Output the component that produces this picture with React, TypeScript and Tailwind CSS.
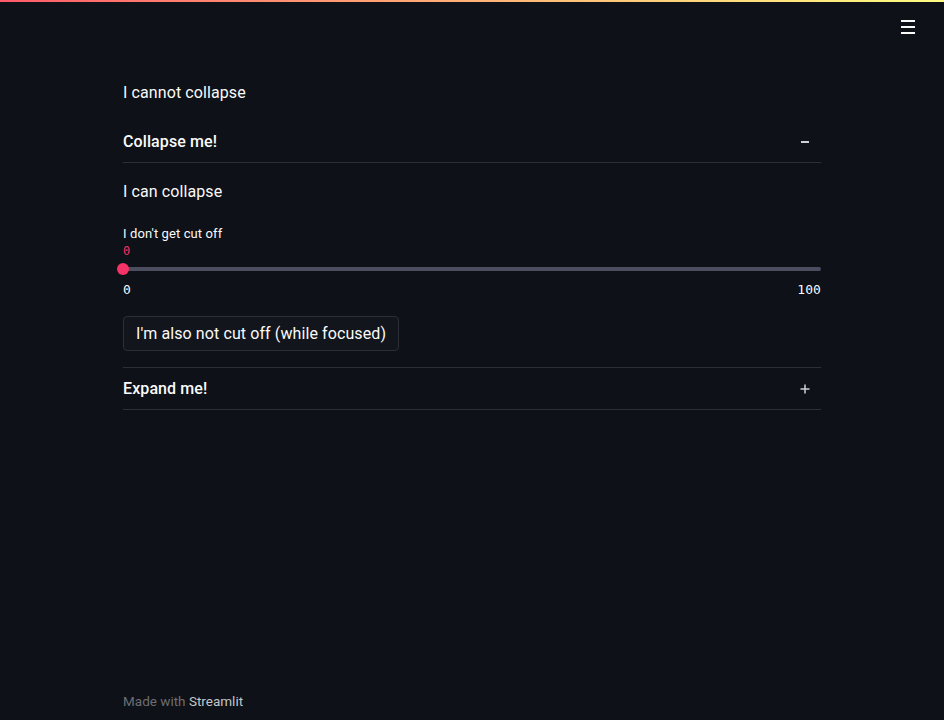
import type { ReactNode } from 'react';

const sans = "font-['Roboto',_'Inter',_sans-serif]";
const mono = "font-['DejaVu_Sans_Mono',_'Liberation_Mono',_monospace]";

function MenuIcon() {
  return (
    <svg width="16" height="16" viewBox="0 0 16 16" fill="#fafafa">
      <rect x="1" y="1" width="14" height="2" />
      <rect x="1" y="7" width="14" height="2" />
      <rect x="1" y="13" width="14" height="2" />
    </svg>
  );
}

function MinusIcon() {
  return (
    <svg width="10" height="10" viewBox="0 0 10 10" fill="#d0d1d4">
      <rect x="1" y="4" width="8" height="2" />
    </svg>
  );
}

function PlusIcon() {
  return (
    <svg width="10" height="10" viewBox="0 0 10 10" fill="#d0d1d4">
      <rect x="0.5" y="4.25" width="9" height="1.5" />
      <rect x="4.25" y="0.5" width="1.5" height="9" />
    </svg>
  );
}

function ExpanderHeader({ label, icon }: { label: string; icon: ReactNode }) {
  return (
    <div className="flex h-[42px] items-center justify-between border-b border-[#2c2f37] pr-[11px]">
      <span className="text-[16px] leading-[20px] font-medium text-[#fafafa]">{label}</span>
      {icon}
    </div>
  );
}

function Slider() {
  return (
    <div className="flex flex-col">
      <div className="h-[22px] text-[13px] leading-[22px] text-[#fafafa]">I don&apos;t get cut off</div>
      <div className={`${mono} h-[12px] text-[12px] leading-[12px] text-[#f63366]`}>0</div>
      <div className="relative mt-[6px] flex h-[12px] items-center">
        <div className="h-[4px] w-full rounded-full bg-[#4a4e5e]" />
        <div className="absolute left-[-6px] top-0 h-[12px] w-[12px] rounded-full bg-[#f63366]" />
      </div>
      <div className={`${mono} mt-[4px] flex justify-between text-[13px] leading-[22px] text-[#fafafa]`}>
        <span>0</span>
        <span>100</span>
      </div>
    </div>
  );
}

export default function App() {
  return (
    <div className={`${sans} flex min-h-screen flex-col bg-[#0e1117] tracking-[0.1px] text-[#fafafa]`}>
      <div className="h-[2px] bg-gradient-to-r from-[#ff5a6a] to-[#fffd80]" />
      <div className="flex h-[52px] items-center justify-end pr-[28px] pb-[2px]">
        <MenuIcon />
      </div>

      <main className="mx-auto flex w-[698px] flex-col pt-[26px]">
        <p className="text-[16px] leading-[26px]">I cannot collapse</p>

        <div className="mt-[15px] border-b border-[#2c2f37]">
          <ExpanderHeader label="Collapse me!" icon={<MinusIcon />} />
          <div className="flex flex-col pt-[16px] pb-[16px]">
            <p className="text-[16px] leading-[26px]">I can collapse</p>
            <div className="mt-[18px]">
              <Slider />
            </div>
            <div className="mt-[15px]">
              <button
                type="button"
                className="h-[35px] rounded-[4px] border border-[#2c2f37] bg-[#12151c] px-[12px] text-[16px] text-[#fafafa]"
              >
                I&apos;m also not cut off (while focused)
              </button>
            </div>
          </div>
        </div>

        <ExpanderHeader label="Expand me!" icon={<PlusIcon />} />
      </main>

      <footer className="mx-auto mt-auto w-[698px] pb-[8px] text-[13.5px] leading-[22px] tracking-normal">
        <span className="text-[#6c6e73]">Made with </span>
        <span className="text-[#c5c6c8]">Streamlit</span>
      </footer>
    </div>
  );
}
